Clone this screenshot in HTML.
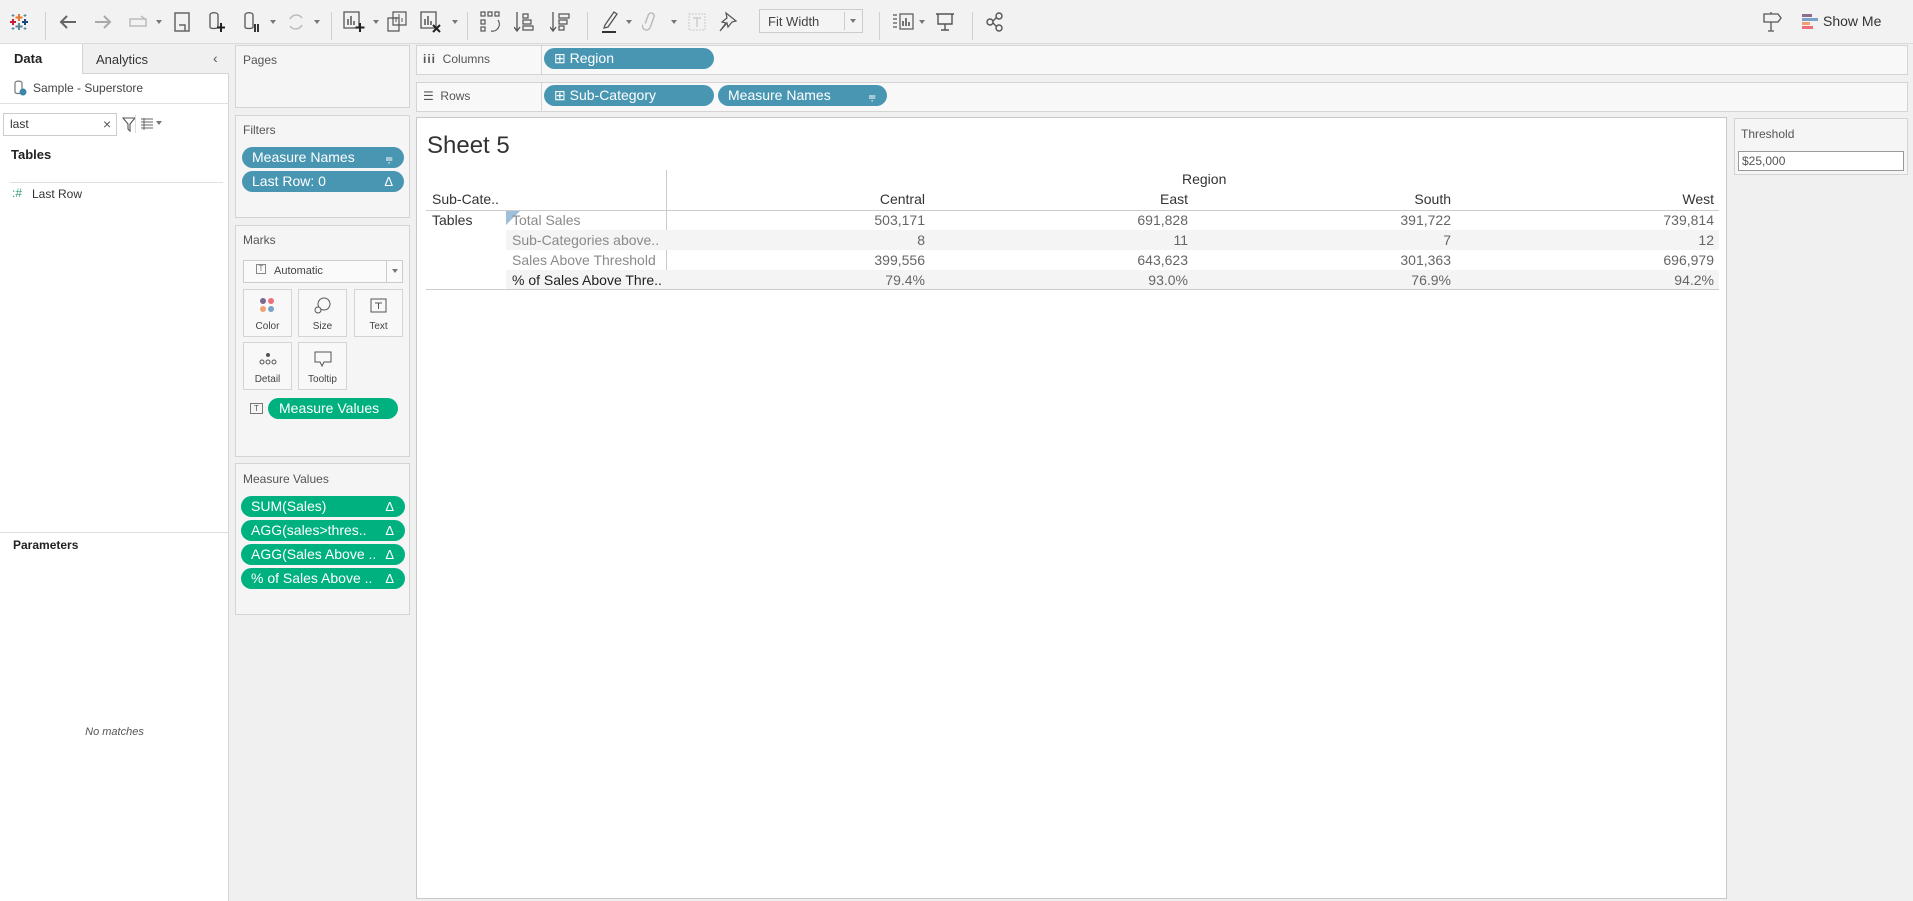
<!DOCTYPE html>
<html><head><meta charset="utf-8">
<style>
*{box-sizing:border-box;margin:0;padding:0}
body{width:1913px;height:901px;overflow:hidden;background:#f0f0f0;font-family:"Liberation Sans",sans-serif;font-size:13px;color:#333;position:relative}
.a{position:absolute}
.box{position:absolute;background:#f5f5f5;border:1px solid #d4d4d4}
.lbl{position:absolute;font-size:12px;color:#555}
.pill{position:absolute;height:21px;border-radius:11px;color:#fff;font-size:14px;line-height:21px;padding-left:10px;white-space:nowrap}
.blue{background:#4996b2}
.green{background:#00b180}
.pill .r{position:absolute;right:11px;top:0;font-size:13px}
.ic{position:absolute;top:10px}
.sep{position:absolute;top:12px;width:1px;height:28px;background:#d0d0d0}
.caret{position:absolute;top:20px;width:0;height:0;border-left:3px solid transparent;border-right:3px solid transparent;border-top:4px solid #777}
.mbtn{position:absolute;width:49px;height:48px;border:1px solid #d4d4d4;background:#f8f8f8;font-size:10px;color:#444;text-align:center}
.mbtn span{position:absolute;bottom:4px;left:0;right:0}
.mbtn svg{position:absolute;left:15px;top:7px}
.num{position:absolute;text-align:right;font-size:14px;color:#666}
.rowbg{position:absolute;left:506px;width:1213px;height:20px;background:#f4f4f4}
.mn{position:absolute;left:512px;font-size:14px;color:#8a8a8a;white-space:nowrap}
</style></head><body>

<div class="a" style="left:0;top:0;width:1913px;height:44px;background:#f2f2f2;border-bottom:1px solid #dadada"></div>
<svg class="ic" style="left:9px;top:12px" width="20" height="20" viewBox="0 0 20 20"><g stroke-width="2"><path d="M10 2v7M6.5 5.5h7" stroke="#e8762c"/><path d="M10 11v7M6.5 14.5h7" stroke="#5b879b"/><path d="M4 7v6M1 10h6" stroke="#c72037"/><path d="M16 7v6M13 10h6" stroke="#1f457e"/><path d="M4 2v3M2.5 3.5h3M16 2v3M14.5 3.5h3M4 15v3M2.5 16.5h3M16 15v3M14.5 16.5h3" stroke="#59879b" stroke-width="1"/></g></svg>
<div class="sep" style="left:45px"></div>
<svg class="ic" style="left:58px;top:12px" width="20" height="20" viewBox="0 0 20 20"><path d="M18 10H3M9 4l-6 6 6 6" fill="none" stroke="#666" stroke-width="2"/></svg>
<svg class="ic" style="left:93px;top:12px" width="20" height="20" viewBox="0 0 20 20"><path d="M2 10h15M11 4l6 6-6 6" fill="none" stroke="#aaa" stroke-width="2"/></svg>
<svg class="ic" style="left:127px;top:14px" width="22" height="16" viewBox="0 0 22 16"><path d="M3 5h16v7H3z M14 2l4 3" fill="none" stroke="#bbb" stroke-width="1.5"/></svg>
<div class="caret" style="left:156px"></div>
<svg class="ic" style="left:174px;top:12px" width="16" height="20" viewBox="0 0 16 20"><path d="M1 1h14v18H1z M5 13h6v6" fill="none" stroke="#666" stroke-width="1.5"/></svg>
<svg class="ic" style="left:208px;top:11px" width="18" height="22" viewBox="0 0 18 22"><path d="M2 4v12c0 2 8 2 8 0V4c0-3-8-3-8 0" fill="none" stroke="#555" stroke-width="1.3"/><path d="M13 12v9M9 16.5h8" stroke="#222" stroke-width="2"/></svg>
<svg class="ic" style="left:243px;top:11px" width="18" height="22" viewBox="0 0 18 22"><path d="M2 4v12c0 2 8 2 8 0V4c0-3-8-3-8 0" fill="none" stroke="#555" stroke-width="1.3"/><path d="M12 13v8M15 13v8" stroke="#222" stroke-width="1.8"/></svg>
<div class="caret" style="left:270px"></div>
<svg class="ic" style="left:286px;top:12px" width="20" height="20" viewBox="0 0 20 20"><path d="M16 6a7 7 0 0 0-12 1M4 14a7 7 0 0 0 12-1" fill="none" stroke="#bbb" stroke-width="1.5"/></svg>
<div class="caret" style="left:314px"></div>
<div class="sep" style="left:331px"></div>
<svg class="ic" style="left:343px;top:11px" width="22" height="22" viewBox="0 0 22 22"><path d="M1 1h15v16H1z" fill="none" stroke="#555" stroke-width="1.3"/><path d="M5 14V8M8 14V5M11 14v-4" stroke="#555" stroke-width="1.5"/><path d="M17 12v9M12.5 16.5h9" stroke="#222" stroke-width="2"/></svg>
<div class="caret" style="left:373px"></div>
<svg class="ic" style="left:387px;top:11px" width="20" height="22" viewBox="0 0 20 22"><path d="M6 1h13v13H6z M1 7h11v13H1z" fill="#f2f2f2" stroke="#555" stroke-width="1.2"/><path d="M9 11V6M12 11V3M15 11V7" stroke="#555"/></svg>
<svg class="ic" style="left:420px;top:11px" width="22" height="22" viewBox="0 0 22 22"><path d="M1 1h15v16H1z" fill="none" stroke="#555" stroke-width="1.3"/><path d="M5 14V8M8 14V5M11 14v-4" stroke="#555" stroke-width="1.5"/><path d="M13 14l7 7M20 14l-7 7" stroke="#222" stroke-width="2"/></svg>
<div class="caret" style="left:452px"></div>
<div class="sep" style="left:467px"></div>
<svg class="ic" style="left:480px;top:11px" width="22" height="22" viewBox="0 0 22 22"><g fill="none" stroke="#555" stroke-width="1.2"><rect x="1" y="1" width="4" height="4"/><rect x="8" y="1" width="4" height="4"/><rect x="15" y="1" width="4" height="4"/><rect x="1" y="9" width="4" height="4"/><rect x="1" y="16" width="4" height="4"/><path d="M18 9a7 7 0 0 1-7 11"/></g></svg>
<svg class="ic" style="left:514px;top:11px" width="20" height="22" viewBox="0 0 20 22"><path d="M3 1v18M0 16l3 4 3-4" fill="none" stroke="#555" stroke-width="1.3"/><path d="M9 3h5v4H9zM9 9h8v4H9zM9 15h10v4H9z" fill="none" stroke="#555" stroke-width="1.2"/></svg>
<svg class="ic" style="left:550px;top:11px" width="20" height="22" viewBox="0 0 20 22"><path d="M3 1v18M0 16l3 4 3-4" fill="none" stroke="#555" stroke-width="1.3"/><path d="M9 3h10v4H9zM9 9h8v4H9zM9 15h5v4H9z" fill="none" stroke="#555" stroke-width="1.2"/></svg>
<div class="sep" style="left:587px"></div>
<svg class="ic" style="left:600px;top:10px" width="20" height="24" viewBox="0 0 20 24"><path d="M5 15L14 2l3 2-9 13-4 1z" fill="none" stroke="#555" stroke-width="1.3"/><path d="M2 22h14" stroke="#333" stroke-width="2"/></svg>
<div class="caret" style="left:626px"></div>
<svg class="ic" style="left:642px;top:11px" width="16" height="22" viewBox="0 0 16 22"><path d="M4 14V5a3 3 0 0 1 6 0v11a4 4 0 0 1-8 0" fill="none" stroke="#bbb" stroke-width="1.5" transform="rotate(20 8 11)"/></svg>
<div class="caret" style="left:671px"></div>
<svg class="ic" style="left:688px;top:13px" width="18" height="18" viewBox="0 0 18 18"><rect x="1" y="1" width="16" height="16" fill="none" stroke="#ccc" stroke-dasharray="2 1"/><path d="M5 5h8M9 5v9" stroke="#ccc" stroke-width="1.5"/></svg>
<svg class="ic" style="left:718px;top:11px" width="20" height="22" viewBox="0 0 20 22"><path d="M8 2l10 8-4 1-4 5-1-4-7 8 6-8-4-1 5-4z" fill="none" stroke="#555" stroke-width="1.2"/></svg>
<div class="a" style="left:759px;top:9px;width:104px;height:24px;border:1px solid #ccc;background:#f4f4f4"><span class="a" style="left:8px;top:4px;font-size:13px;color:#444">Fit Width</span><div class="a" style="left:84px;top:2px;width:1px;height:18px;background:#ccc"></div><div class="caret" style="left:90px;top:9px"></div></div>
<div class="sep" style="left:879px"></div>
<svg class="ic" style="left:892px;top:13px" width="22" height="18" viewBox="0 0 22 18"><g fill="none" stroke="#555" stroke-width="1.2"><path d="M1 2h4M1 6h4M1 10h4M1 14h4"/><rect x="8" y="1" width="13" height="15"/><path d="M11 13V8M14 13V5M17 13V9" stroke-width="1.6"/></g></svg>
<div class="caret" style="left:919px"></div>
<svg class="ic" style="left:935px;top:12px" width="20" height="20" viewBox="0 0 20 20"><path d="M1 2h18M3 2v10h14V2M10 12v6M6 18h8" fill="none" stroke="#555" stroke-width="1.4"/></svg>
<div class="sep" style="left:972px"></div>
<svg class="ic" style="left:986px;top:12px" width="18" height="20" viewBox="0 0 18 20"><g fill="none" stroke="#555" stroke-width="1.4"><circle cx="13" cy="4" r="3"/><circle cx="4" cy="10" r="3"/><circle cx="13" cy="16" r="3"/><path d="M7 9l4-4M7 11l4 4"/></g></svg>
<svg class="ic" style="left:1762px;top:11px" width="20" height="22" viewBox="0 0 20 22"><path d="M2 3h14l3 4-3 4H2zM9 1v2M9 11v9M6 20h6" fill="none" stroke="#555" stroke-width="1.3"/></svg>
<svg class="ic" style="left:1802px;top:13px" width="17" height="16" viewBox="0 0 17 16"><rect x="0" y="1" width="10" height="3" fill="#8c6d8f"/><rect x="0" y="5" width="16" height="3" fill="#7aa2c8"/><rect x="0" y="9" width="8" height="3" fill="#f2a071"/><rect x="0" y="13" width="11" height="3" fill="#ee6f7a"/></svg>
<div class="a" style="left:1823px;top:13px;font-size:14px;color:#333">Show Me</div>

<div class="a" style="left:0;top:44px;width:229px;height:857px;background:#fff;border-right:1px solid #d4d4d4"></div>
<div class="a" style="left:82px;top:44px;width:147px;height:30px;background:#f0f0f0;border-left:1px solid #d4d4d4;border-bottom:1px solid #d4d4d4"></div>
<div class="a" style="left:14px;top:51px;font-size:13px;font-weight:bold;color:#222">Data</div>
<div class="a" style="left:96px;top:52px;font-size:13px;color:#333">Analytics</div>
<div class="a" style="left:213px;top:50px;font-size:14px;color:#555">‹</div>
<svg class="a" style="left:13px;top:80px" width="16" height="16" viewBox="0 0 16 16"><path d="M2 3v9c0 2 7 2 7 0V3c0-2.5-7-2.5-7 0" fill="none" stroke="#777" stroke-width="1.2"/><circle cx="10" cy="12" r="3.5" fill="#3e86a8"/></svg>
<div class="a" style="left:33px;top:81px;font-size:12px;color:#444">Sample - Superstore</div>
<div class="a" style="left:0;top:103px;width:229px;height:1px;background:#e0e0e0"></div>
<div class="a" style="left:3px;top:113px;width:114px;height:23px;border:1px solid #ccc;background:#fff"><span class="a" style="left:6px;top:3px;font-size:12px;color:#333">last</span><span class="a" style="left:99px;top:2px;font-size:14px;color:#555">×</span></div>
<svg class="a" style="left:122px;top:116px" width="14" height="16" viewBox="0 0 14 16"><path d="M1 2h12L8 8v7L6 13V8z" fill="none" stroke="#555" stroke-width="1.1"/></svg>
<div class="a" style="left:135px;top:115px;width:1px;height:18px;background:#ddd"></div>
<svg class="a" style="left:140px;top:118px" width="14" height="12" viewBox="0 0 14 12"><path d="M1 1h12M1 4h12M1 7h12M1 10h12M4 0v12" stroke="#666" stroke-width="1"/></svg>
<div class="caret" style="left:156px;top:121px"></div>
<div class="a" style="left:11px;top:147px;font-size:13px;font-weight:bold;color:#222">Tables</div>
<div class="a" style="left:10px;top:182px;width:213px;height:1px;background:#e0e0e0"></div>
<div class="a" style="left:12px;top:186px;font-size:12px;color:#3a9c6f">:#</div>
<div class="a" style="left:32px;top:187px;font-size:12px;color:#333">Last Row</div>
<div class="a" style="left:0;top:532px;width:229px;height:1px;background:#ddd"></div>
<div class="a" style="left:13px;top:538px;font-size:12px;font-weight:bold;color:#222">Parameters</div>
<div class="a" style="left:0;top:726px;width:229px;text-align:center;font-size:11px;font-style:italic;color:#555">No matches</div>

<div class="box" style="left:235px;top:45px;width:175px;height:63px"></div>
<div class="lbl" style="left:243px;top:53px">Pages</div>
<div class="box" style="left:235px;top:115px;width:175px;height:103px"></div>
<div class="lbl" style="left:243px;top:123px">Filters</div>
<div class="pill blue" style="left:242px;top:147px;width:162px">Measure Names<span class="r">⩦</span></div>
<div class="pill blue" style="left:242px;top:171px;width:162px">Last Row: 0<span class="r">Δ</span></div>

<div class="box" style="left:235px;top:225px;width:175px;height:232px"></div>
<div class="lbl" style="left:243px;top:233px">Marks</div>
<div class="a" style="left:243px;top:260px;width:160px;height:23px;border:1px solid #ccc;background:#fafafa"><span class="a" style="left:12px;top:3px;color:#777;border:1px solid #888;width:10px;height:10px;line-height:8px;text-align:center;font-size:8px">T</span><span class="a" style="left:30px;top:4px;font-size:11px;color:#444">Automatic</span><div class="a" style="left:142px;top:0;width:1px;height:21px;background:#ccc"></div><div class="caret" style="left:148px;top:8px"></div></div>
<div class="mbtn" style="left:243px;top:289px"><svg width="18" height="18" viewBox="0 0 18 18"><circle cx="4" cy="4" r="3" fill="#7b668f"/><circle cx="12" cy="4" r="3" fill="#ee6f7a"/><circle cx="4" cy="12" r="3" fill="#f2a071"/><circle cx="12" cy="12" r="3" fill="#7aa2c8"/></svg><span>Color</span></div>
<div class="mbtn" style="left:298px;top:289px"><svg width="18" height="18" viewBox="0 0 18 18"><circle cx="10" cy="7" r="6" fill="none" stroke="#555"/><circle cx="4" cy="13" r="3" fill="#f8f8f8" stroke="#555"/></svg><span>Size</span></div>
<div class="mbtn" style="left:354px;top:289px"><svg width="18" height="18" viewBox="0 0 18 18"><rect x="1" y="2" width="15" height="13" fill="none" stroke="#555"/><path d="M5 6h7M8.5 6v6" stroke="#555"/></svg><span>Text</span></div>
<div class="mbtn" style="left:243px;top:342px"><svg width="18" height="18" viewBox="0 0 18 18"><circle cx="9" cy="5" r="2" fill="#555"/><circle cx="3" cy="12" r="2" fill="none" stroke="#555"/><circle cx="9" cy="12" r="2" fill="none" stroke="#555"/><circle cx="15" cy="12" r="2" fill="none" stroke="#555"/></svg><span>Detail</span></div>
<div class="mbtn" style="left:298px;top:342px"><svg width="18" height="18" viewBox="0 0 18 18"><path d="M1 2h16v10H10l-2 4-2-4H1z" fill="none" stroke="#555"/></svg><span>Tooltip</span></div>
<div class="a" style="left:250px;top:403px;width:13px;height:11px;border:1px solid #777;font-size:8px;line-height:9px;text-align:center;color:#555">T</div>
<div class="pill green" style="left:268px;top:398px;width:130px;padding-left:11px">Measure Values</div>

<div class="box" style="left:235px;top:463px;width:175px;height:152px"></div>
<div class="lbl" style="left:243px;top:472px">Measure Values</div>
<div class="pill green" style="left:241px;top:496px;width:164px">SUM(Sales)<span class="r">Δ</span></div>
<div class="pill green" style="left:241px;top:520px;width:164px">AGG(sales&gt;thres..<span class="r">Δ</span></div>
<div class="pill green" style="left:241px;top:544px;width:164px">AGG(Sales Above ..<span class="r">Δ</span></div>
<div class="pill green" style="left:241px;top:568px;width:164px">% of Sales Above ..<span class="r">Δ</span></div>

<div class="box" style="left:416px;top:45px;width:1492px;height:30px;background:#f8f8f8"></div>
<div class="a" style="left:541px;top:45px;width:1px;height:30px;background:#d4d4d4"></div>
<div class="a" style="left:423px;top:52px;font-size:12px;color:#555"><b style="letter-spacing:1px">iii</b>&nbsp; Columns</div>
<div class="pill blue" style="left:544px;top:48px;width:170px">⊞ Region</div>
<div class="box" style="left:416px;top:82px;width:1492px;height:30px;background:#f8f8f8"></div>
<div class="a" style="left:541px;top:82px;width:1px;height:30px;background:#d4d4d4"></div>
<div class="a" style="left:423px;top:89px;font-size:12px;color:#555">☰&nbsp; Rows</div>
<div class="pill blue" style="left:544px;top:85px;width:170px">⊞ Sub-Category</div>
<div class="pill blue" style="left:718px;top:85px;width:169px">Measure Names<span class="r">⩦</span></div>

<div class="box" style="left:1734px;top:118px;width:174px;height:57px"></div>
<div class="lbl" style="left:1741px;top:127px">Threshold</div>
<div class="a" style="left:1738px;top:151px;width:166px;height:20px;border:1px solid #999;background:#fff;font-size:12px;color:#555;padding:2px 3px">$25,000</div>

<div class="a" style="left:416px;top:117px;width:1311px;height:782px;background:#fff;border:1px solid #c8c8c8"></div>
<div class="a" style="left:427px;top:132px;font-size:24px;color:#333">Sheet 5</div>
<div class="a" style="left:666px;top:170px;width:1px;height:120px;background:#ccc"></div>
<div class="a" style="left:1182px;top:171px;font-size:14px;color:#333">Region</div>
<div class="num" style="left:800px;top:191px;width:125px;color:#333">Central</div>
<div class="num" style="left:1063px;top:191px;width:125px;color:#333">East</div>
<div class="num" style="left:1326px;top:191px;width:125px;color:#333">South</div>
<div class="num" style="left:1589px;top:191px;width:125px;color:#333">West</div>
<div class="a" style="left:432px;top:191px;font-size:14px;color:#333">Sub-Cate..</div>
<div class="a" style="left:426px;top:210px;width:1293px;height:1px;background:#ccc"></div>
<div class="rowbg" style="top:230px"></div>
<div class="rowbg" style="top:270px"></div>
<div class="a" style="left:426px;top:289px;width:1293px;height:1px;background:#ccc"></div>
<div class="a" style="left:432px;top:212px;font-size:14px;color:#333">Tables</div>
<svg class="a" style="left:506px;top:211px" width="14" height="14"><path d="M0 0h14L0 14z" fill="#9ec0da"/></svg>
<div class="mn" style="top:212px">Total Sales</div>
<div class="mn" style="top:232px">Sub-Categories above..</div>
<div class="mn" style="top:252px">Sales Above Threshold</div>
<div class="mn" style="top:272px;color:#222">% of Sales Above Thre..</div>
<div class="num" style="left:800px;top:212px;width:125px">503,171</div>
<div class="num" style="left:1063px;top:212px;width:125px">691,828</div>
<div class="num" style="left:1326px;top:212px;width:125px">391,722</div>
<div class="num" style="left:1589px;top:212px;width:125px">739,814</div>
<div class="num" style="left:800px;top:232px;width:125px">8</div>
<div class="num" style="left:1063px;top:232px;width:125px">11</div>
<div class="num" style="left:1326px;top:232px;width:125px">7</div>
<div class="num" style="left:1589px;top:232px;width:125px">12</div>
<div class="num" style="left:800px;top:252px;width:125px">399,556</div>
<div class="num" style="left:1063px;top:252px;width:125px">643,623</div>
<div class="num" style="left:1326px;top:252px;width:125px">301,363</div>
<div class="num" style="left:1589px;top:252px;width:125px">696,979</div>
<div class="num" style="left:800px;top:272px;width:125px">79.4%</div>
<div class="num" style="left:1063px;top:272px;width:125px">93.0%</div>
<div class="num" style="left:1326px;top:272px;width:125px">76.9%</div>
<div class="num" style="left:1589px;top:272px;width:125px">94.2%</div>
</body></html>
